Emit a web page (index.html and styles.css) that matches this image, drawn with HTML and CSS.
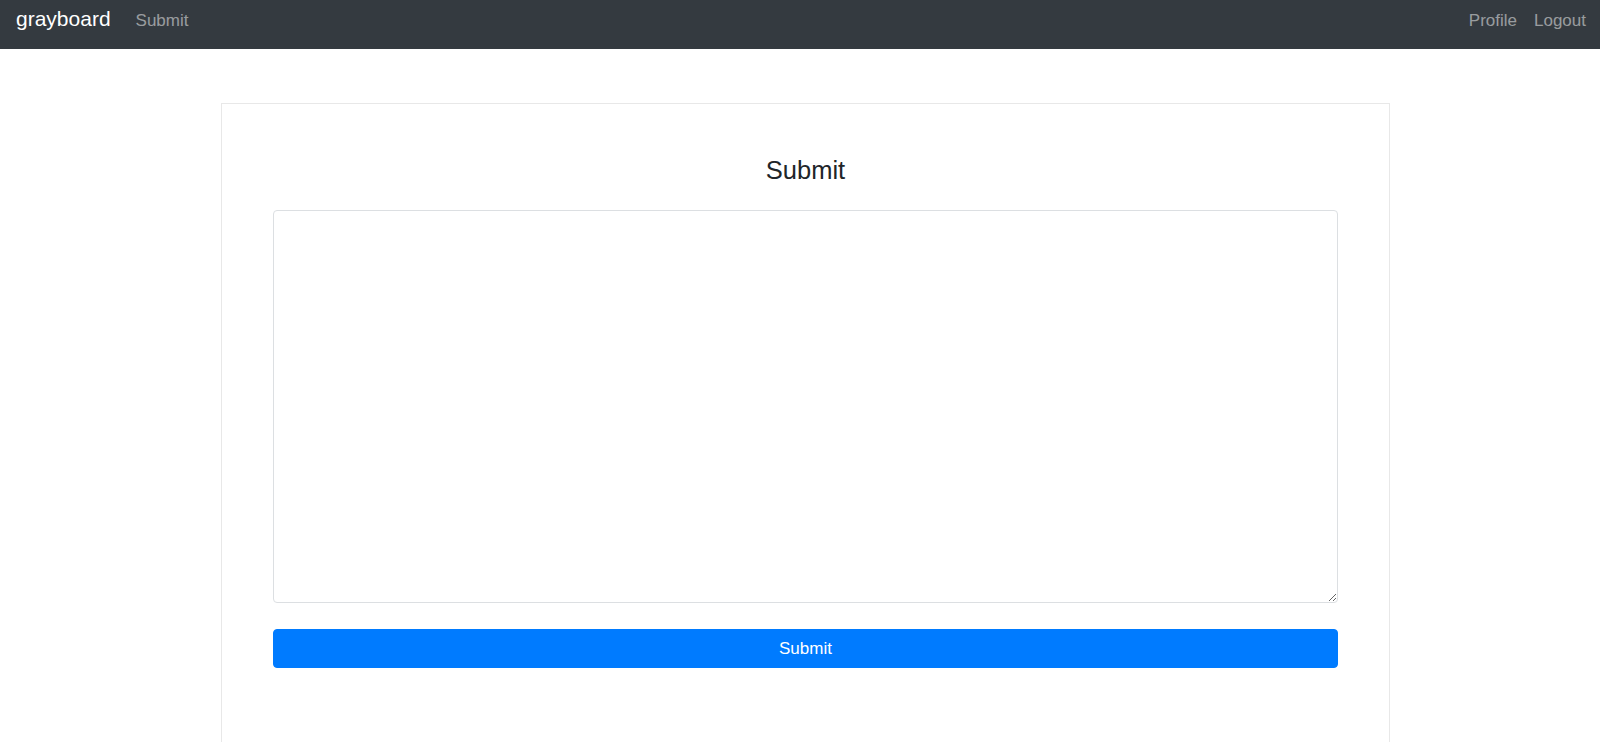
FILE: index.html
```html
<!DOCTYPE html>
<html lang="en">
<head>
<meta charset="utf-8">
<title>grayboard</title>
<link rel="stylesheet" href="styles.css">
</head>
<body>
<nav class="navbar">
  <a class="brand" href="#">grayboard</a>
  <a class="nav-link" href="#">Submit</a>
  <div class="nav-right">
    <a class="nav-link" href="#">Profile</a>
    <a class="nav-link last" href="#">Logout</a>
  </div>
</nav>
<main class="main">
  <div class="card">
    <h4 class="title">Submit</h4>
    <form class="form">
      <textarea class="text-input"></textarea>
      <button type="button" class="btn">Submit</button>
    </form>
  </div>
</main>
</body>
</html>
```
FILE: styles.css
```css
* { box-sizing: border-box; }
html, body { margin: 0; padding: 0; }
body {
  font-family: "Liberation Sans", Arial, sans-serif;
  color: #212529;
  background: #fff;
  overflow: hidden;
}
.navbar {
  height: 49px;
  background: #343a40;
  display: flex;
  align-items: baseline;
  padding: 7px 14px 0 16px;
}
.brand {
  font-size: 21px;
  line-height: 24px;
  color: #fff;
  text-decoration: none;
  margin-right: 25px;
}
.nav-link {
  font-size: 17px;
  line-height: 24px;
  color: rgba(255,255,255,.5);
  text-decoration: none;
}
.nav-right {
  margin-left: auto;
  display: flex;
  align-items: baseline;
  gap: 17px;
}
.main {
  padding-top: 54px;
}
.card {
  margin-left: 221px;
  width: 1169px;
  border: 1px solid #e8e8e8;
  border-bottom: none;
  padding: 51px 51px 120px 51px;
}
.title {
  margin: 0 0 25px 0;
  font-size: 25.5px;
  line-height: 30px;
  font-weight: 400;
  text-align: center;
  color: #212529;
}
.form {
  display: flex;
  flex-direction: column;
}
.text-input {
  display: block;
  width: 100%;
  height: 393px;
  border: 1px solid #dcdfe2;
  border-radius: 4px;
  padding: 6px 12px;
  font-family: inherit;
  font-size: 16px;
  margin: 0 0 26px 0;
  background: #fff;
}
.btn {
  display: block;
  width: 100%;
  height: 39px;
  background: #007bff;
  border: 1px solid #007bff;
  border-radius: 4px;
  color: #fff;
  font-family: inherit;
  font-size: 17px;
  line-height: 24px;
  padding: 6px 12px;
}
```
